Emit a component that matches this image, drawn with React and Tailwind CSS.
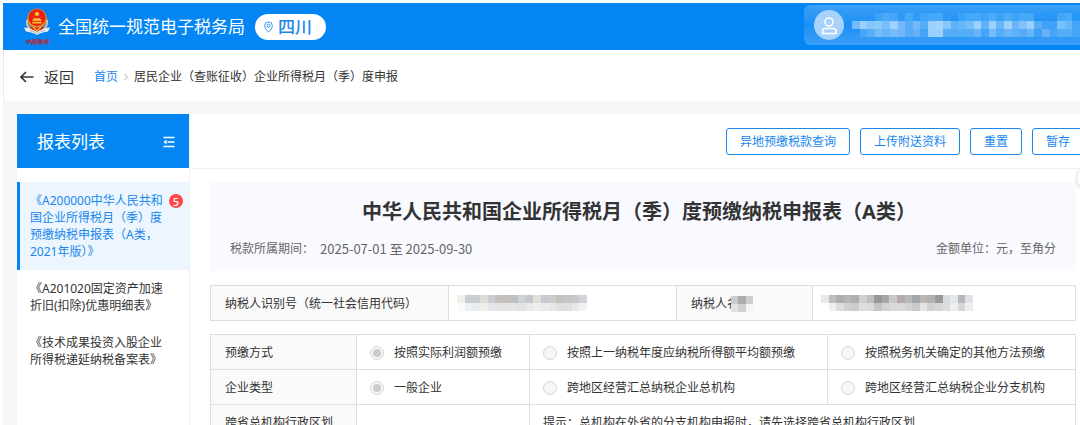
import React, { useState } from 'react';

const ACCOUNT_CELLS = [
  ['', '', '', '#3fa4f7', '#4aa9f8', '#43a6f8', '#2c9af6', '#46a8f8', '#2c9af6', '#3fa4f8', '#46a8f8', '#46a8f8', '#2c9af6', '', '#3ba2f7', '#46a8f8', '#46a8f8', '#3fa4f7', '#4dabf8', '#3ba2f7', '#4dabf8', '#3fa4f7', '#46a8f8', '#46a8f8', '', '#2697f5', '', '#43a6f8', '#4aa9f8', '#2697f5'],
  ['#74bdfa', '#9bcffc', '#84c5fb', '#8bc9fb', '#74bffa', '#9fd3fd', '#74b8fa', '#57acf8', '#74b8fa', '#57acf8', '#9bcffc', '#a5d5fd', '#8bc6fb', '#5fb2f9', '#66b6f9', '#74bffa', '#9bd1fd', '#5fb2f9', '#9bd1fd', '#66b6f9', '#9bd1fd', '#6cb3fa', '#84c2fb', '#9bcffc', '#57acf8', '#3fa2f7', '#3fa2f7', '#74c3fa', '#66b6f9', '#43a4f8'],
  ['', '#4aa5f8', '#5aaef9', '#74bdfa', '#66b6f9', '#74bdfa', '#74b4fa', '#57acf8', '#66b0f9', '#43a4f8', '#9bcffc', '#9bcffc', '#57acf8', '#57acf8', '#4fb0f8', '#57acf8', '#66b6f9', '#43a4f8', '#74bdfa', '#57acf8', '#66b6f9', '#5fb2f9', '#57acf8', '#66b6f9', '#3fa2f7', '#66b0f9', '#43a4f8', '#57acf8', '#57acf8', '#43a4f8'],
];

const TAX_ID_CELLS = [
  ['#f4efeb', '#c9ccd1', '#c9cdd1', '#dfdbd5', '#ccced4', '#c5c1be', '#c5bfbd', '#bdbec6', '#cfd2d3', '#c6c6c6', '#e2ddd6', '#c6c9d1', '#cfcdcb', '#c3c2c1', '#c5c5c5', '#c8c8c8', '#d1d4da'],
  ['#fafafa', '#eff0f2', '#e9edef', '#f0eeea', '#e4e6e9', '#e4e3e1', '#e3e3e3', '#e4e4e5', '#dfe2e3', '#e9e9e9', '#f0eeec', '#ebebed', '#e6e6e6', '#e0e0e0', '#e0e0e0', '#e8e8e8', '#f2f2f3'],
];

const NAME_CELLS = [
  ['#e9e9e9', '#bdbdbd', '#adaeaf', '#b6b7b9', '#acaeb1', '#d1d0cf', '#c1bfbd', '#999896', '#a7a8aa', '#c7cacb', '#b2aba8', '#b7b8ba', '#a4a6ad', '#bab6b4', '#b3b2b1', '#9b9a9b', '#d8dde1', '#e7e7e9', '#b5b8bd', '#dfe1e5'],
  ['', '#f0f0f0', '#dddddd', '#d0d0cf', '#cccccc', '#dddddd', '#dadada', '#c4c4c4', '#d3d3d3', '#d8d8d8', '#dcdada', '#d3d3d3', '#c9cacd', '#e7e5e4', '#d0d0d0', '#d6d6d6', '#dddddd', '#eeeeee', '#d5d8db', '#eeeeee'],
];

const LABEL_CELLS = [
  ['#c9cccf', '#adadad', '#cfcfcf'],
  ['#e2e2e2', '#d0d0d0', '#f5f5f5'],
];

const REPORTS = [
  { name: '《A200000中华人民共和国企业所得税月（季）度预缴纳税申报表（A类，2021年版）》', count: 5 },
  { name: '《A201020固定资产加速折旧(扣除)优惠明细表》' },
  { name: '《技术成果投资入股企业所得税递延纳税备案表》' },
];

const ACTIONS = ['异地预缴税款查询', '上传附送资料', '重置', '暂存'];

const OPTION_ROWS = [
  {
    label: '预缴方式',
    name: 'prepay',
    options: ['按照实际利润额预缴', '按照上一纳税年度应纳税所得额平均额预缴', '按照税务机关确定的其他方法预缴'],
  },
  {
    label: '企业类型',
    name: 'company',
    options: ['一般企业', '跨地区经营汇总纳税企业总机构', '跨地区经营汇总纳税企业分支机构'],
  },
];

// Masked personal data, one rect per cell
function Mosaic({ cells, size = 8, className }) {
  const cols = cells[0].length;
  return (
    <svg
      aria-hidden="true"
      className={className}
      viewBox={`0 0 ${cols * size} ${cells.length * size}`}
      preserveAspectRatio="none"
      shapeRendering="crispEdges"
    >
      {cells.map((row, y) =>
        row.map((fill, x) =>
          fill ? <rect key={`${x}-${y}`} x={x * size} y={y * size} width={size} height={size} fill={fill} /> : null
        )
      )}
    </svg>
  );
}

function Emblem() {
  return (
    <svg viewBox="0 0 26 38" className="h-[38px] w-[26px] shrink-0" aria-hidden="true">
      <path d="M4 8c-3 6-2 12 4 16l5 2 5-2c6-4 7-10 4-16l-3 9H7z" fill="#8e8f86" />
      <path d="M3 12c-1 4 1 9 5 11M23 12c1 4-1 9-5 11" stroke="#d7d3bd" strokeWidth="1.5" fill="none" />
      <circle cx="13" cy="10" r="9.6" fill="#f0931f" />
      <circle cx="13" cy="9.5" r="8.6" fill="#e8200f" />
      <path d="M13 3l.9 1.8 2 .2-1.5 1.3.4 2-1.8-1-1.8 1 .4-2L10.100 5l2-.2z" fill="#ffd93a" />
      <path d="M8.500 9h1M16.500 9h1M8.500 12.500h9l-1.500-2h-6zM8.500 14h9v1.200h-9z" fill="#ffc832" stroke="#ffc832" strokeWidth=".4" />
      <path d="M6 18c4 2 10 2 14 0l-2 4-5 2-5-2z" fill="#d8261a" />
      <path d="M9 19l4 4 4-4" stroke="#f5c13c" strokeWidth="1.2" fill="none" />
      <path d="M0 19.500c4 .5 9 2 13 4.500 4-2.500 9-4 13-4.500l-2 4c-4 .5-8 1.500-11 3.500-3-2-7-3-11-3.500z" fill="#eef1f3" />
      <path d="M5 22.500c3 .6 6 1.600 8 3 2-1.400 5-2.400 8-3" stroke="#8fa6b8" strokeWidth=".7" fill="none" />
      <text x="13" y="36" textAnchor="middle" fontSize="6" fontWeight="700" fontStyle="italic" fill="#c01c28">中国税务</text>
    </svg>
  );
}

function Header() {
  return (
    <header className="flex h-[47px] items-center bg-[#0386f4] pl-[21px] text-white">
      <Emblem />
      <h1 className="ml-2 text-[17px] leading-6">全国统一规范电子税务局</h1>
      <button className="ml-2.5 flex h-[26px] items-center gap-1 rounded-full bg-white px-2 text-[#1787ee]">
        <svg viewBox="0 0 12 14" className="h-3 w-[11px]" fill="none" stroke="currentColor" aria-hidden="true">
          <path d="M6 13C3.500 10.500 1.500 8.300 1.500 5.500a4.500 4.500 0 0 1 9 0C10.500 8.300 8.500 10.500 6 13z" />
          <circle cx="6" cy="5.500" r="1.800" />
        </svg>
        <span className="pr-1.5 text-[17px] font-medium leading-6">四川</span>
      </button>
      <div className="mb-1 ml-auto flex h-10 w-[276px] items-center overflow-hidden rounded-l-md bg-linear-to-b from-[#3a9ff7] via-[#1a90f5] to-[#3a9ff7] pl-2.5">
        <svg viewBox="0 0 30 30" className="h-[30px] w-[30px] shrink-0" aria-hidden="true">
          <circle cx="15" cy="15" r="15" fill="#a6d2fb" />
          <g fill="none" stroke="#fff" strokeWidth="1.6">
            <circle cx="15" cy="12" r="4" />
            <path d="M8.500 23.500v-2c0-2 1.500-3 3.500-3h6.500c2 0 3.500 1 3.500 3v2z" strokeLinejoin="round" />
          </g>
        </svg>
        <Mosaic cells={ACCOUNT_CELLS} className="ml-2 h-6 w-[228px] shrink-0" />
      </div>
    </header>
  );
}

function Breadcrumb() {
  return (
    <nav className="flex h-[51px] items-center border-l border-[#ececec] bg-white pl-4 pt-0.5">
      <a href="#back" className="flex items-center gap-2.5 text-[15px] leading-6">
        <svg viewBox="0 0 14 12" className="h-3 w-3.5" fill="none" stroke="#333" strokeWidth="1.6" aria-hidden="true">
          <path d="M13.500 6H1M6 1L1 6l5 5" />
        </svg>
        返回
      </a>
      <a href="#home" className="ml-5 text-[#1787ee]">首页</a>
      <svg viewBox="0 0 4 8" className="mx-1.5 h-2 w-1" fill="none" stroke="#aaa" aria-hidden="true">
        <path d="M.5 1l3 3-3 3" />
      </svg>
      <span>居民企业（查账征收）企业所得税月（季）度申报</span>
    </nav>
  );
}

function Sidebar({ active, onSelect }) {
  return (
    <aside className="w-[173px] shrink-0 border-r border-[#f0f0f0] bg-white">
      <div className="flex h-[54px] items-center justify-between bg-[#0386f4] pl-5 pr-3.5 pt-0.5 text-white">
        <h2 className="text-[17px] leading-6">报表列表</h2>
        <button aria-label="收起">
          <svg viewBox="0 0 12 12" className="h-3 w-3" fill="none" stroke="currentColor" strokeWidth="1.4" aria-hidden="true">
            <path d="M.5 1.500h11M4.500 6h7M.5 10.500h11" />
            <path d="M3.500 3.500L.5 6l3 2.500z" fill="currentColor" stroke="none" />
          </svg>
        </button>
      </div>
      <ul className="mt-3.5">
        {REPORTS.map((report, i) => (
          <li key={report.name}>
            <button
              onClick={() => onSelect(i)}
              className={`relative block w-full border-l-[3px] py-2.5 pl-2.5 pr-6 text-left leading-[17px] ${
                i === active ? 'border-[#0386f4] bg-[#edf6ff] text-[#1787ee]' : 'border-transparent'
              }`}
            >
              {report.name}
              {report.count && (
                <span className="absolute right-1.5 top-3 flex h-3.5 w-3.5 items-center justify-center rounded-full bg-[#ff4545] text-[11px] font-medium leading-none text-white">
                  {report.count}
                </span>
              )}
            </button>
          </li>
        ))}
      </ul>
    </aside>
  );
}

function TaxpayerTable() {
  return (
    <table className="mt-3.5 w-full table-fixed border-collapse">
      <colgroup>
        <col className="w-[238px]" />
        <col />
        <col className="w-[136px]" />
        <col className="w-[263px]" />
      </colgroup>
      <tbody>
        <tr className="h-[35px]">
          <th className="border border-[#dedede] bg-[#fafafa] pl-3.5 pt-0.5 text-left font-normal">纳税人识别号（统一社会信用代码）</th>
          <td className="border border-[#dedede] pl-2">
            <Mosaic cells={TAX_ID_CELLS} className="h-4 w-[130px]" />
          </td>
          <th className="border border-[#dedede] bg-[#fafafa] pl-3.5 pt-0.5 text-left font-normal">
            <div className="flex items-center">
              <span>纳税人名</span>
              <Mosaic cells={LABEL_CELLS} className="-ml-2 h-4 w-[22px]" />
            </div>
          </th>
          <td className="border border-[#dedede] pl-2">
            <Mosaic cells={NAME_CELLS} className="h-4 w-[152px]" />
          </td>
        </tr>
      </tbody>
    </table>
  );
}

function OptionsTable() {
  const [selected, setSelected] = useState({ prepay: 0, company: 0 });

  return (
    <table className="mt-[13px] w-full table-fixed border-collapse">
      <colgroup>
        <col className="w-[146px]" />
        <col className="w-[173px]" />
        <col />
        <col className="w-[248px]" />
      </colgroup>
      <tbody>
        {OPTION_ROWS.map((row) => (
          <tr key={row.name} className="h-[35px]">
            <th className="border border-[#dedede] bg-[#fafafa] pl-3.5 pt-0.5 text-left font-normal">{row.label}</th>
            {row.options.map((option, i) => (
              <td key={option} className="border border-[#dedede] pl-[13px] pt-0.5">
                <label className="flex items-center gap-2.5">
                  <input
                    type="radio"
                    name={row.name}
                    checked={selected[row.name] === i}
                    onChange={() => setSelected({ ...selected, [row.name]: i })}
                    className="flex h-3.5 w-3.5 shrink-0 appearance-none items-center justify-center rounded-full border border-[#d6d6d6] bg-[#f6f6f6] checked:before:h-2 checked:before:w-2 checked:before:rounded-full checked:before:bg-[#cbcbcb]"
                  />
                  {option}
                </label>
              </td>
            ))}
          </tr>
        ))}
        <tr className="h-[35px]">
          <th className="border border-[#dedede] bg-[#fafafa] pl-3.5 pt-0.5 text-left font-normal">跨省总机构行政区划</th>
          <td className="border border-[#dedede]" />
          <td colSpan={2} className="border border-[#dedede] pl-[13px] pt-0.5">提示：总机构在外省的分支机构申报时，请先选择跨省总机构行政区划</td>
        </tr>
      </tbody>
    </table>
  );
}

export default function App() {
  const [active, setActive] = useState(0);

  return (
    <div className="flex h-screen flex-col overflow-hidden bg-white pl-[3px] pt-[3px] font-['Noto_Sans','Noto_Sans_CJK_SC',sans-serif] text-[12px] leading-[18px] text-[#333]">
      <Header />
      <Breadcrumb />
      <div className="flex min-h-0 flex-1 bg-[#f5f7f9] pl-3.5 pt-[13px]">
        <Sidebar active={active} onSelect={setActive} />
        <main className="relative min-w-0 flex-1 bg-white">
          <div className="-mr-1 flex h-[55px] items-center justify-end gap-2.5 border-b border-[#f0f0f0]">
            {ACTIONS.map((action) => (
              <button key={action} className="h-[27px] rounded-[3px] border border-[#1787ee] px-[13px] pt-0.5 text-[#1787ee]">
                {action}
              </button>
            ))}
          </div>
          <button aria-label="更多" className="absolute -right-5 top-[52px] h-6 w-6 rounded-full border border-[#e8e8e8] bg-white shadow-sm" />
          <div className="pl-5 pr-1 pt-[13px]">
            <section className="bg-[#f9faff] px-5 pb-[13px] pt-4">
              <h2 className="pr-2 text-center text-[20px] font-bold leading-7">中华人民共和国企业所得税月（季）度预缴纳税申报表（A类）</h2>
              <div className="mt-3.5 flex justify-between text-[#666]">
                <p className="flex gap-1.5">
                  税款所属期间：
                  <span className="font-['Noto_Sans_CJK_SC',sans-serif] text-[13px]">2025-07-01 至 2025-09-30</span>
                </p>
                <p>金额单位：元，至角分</p>
              </div>
            </section>
            <TaxpayerTable />
            <OptionsTable />
          </div>
        </main>
      </div>
    </div>
  );
}
